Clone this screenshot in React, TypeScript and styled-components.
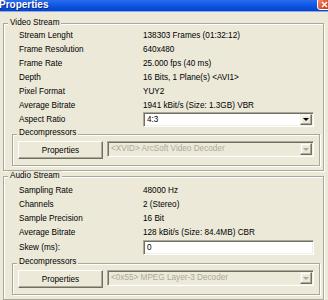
import React from 'react';
import styled, { createGlobalStyle } from 'styled-components';

const Global = createGlobalStyle`
  html, body { margin: 0; padding: 0; background: #ECE9D8; }
  body { font-family: "Liberation Sans", Arial, sans-serif; font-size: 8.2px; color: #000; }
  * { box-sizing: border-box; }
`;

const Window = styled.div`
  width: 328px;
  height: 300px;
  overflow: hidden;
  background: #ECE9D8;
  display: flex;
  flex-direction: column;
`;

const TitleBar = styled.div`
  flex: none;
  height: 12px;
  display: flex;
  align-items: flex-start;
  justify-content: space-between;
  background: linear-gradient(#2B6CEF, #0A55E2 55%, #0444CC);
  border-bottom: 1px solid #8EA9E0;
`;

const TitleText = styled.span`
  margin: -1px 0 0 -1px;
  font-family: "Liberation Sans", Arial, sans-serif;
  font-weight: bold;
  font-size: 10px;
  line-height: 11px;
  color: #fff;
  text-shadow: 1px 1px 0 #0A2A8A;
`;

const CloseButton = styled.div`
  width: 14px;
  height: 12px;
  margin: -2px -3px 0 0;
  border: 1px solid #fff;
  border-radius: 3px;
  background: linear-gradient(135deg, #F09A7F, #E0552F 50%, #C23A18);
  display: flex;
  align-items: center;
  justify-content: center;
`;

const Body = styled.div`
  flex: 1;
  padding: 6px 4px 0 3px;
  display: flex;
  flex-direction: column;
`;

const Group = styled.fieldset<{ $mt?: number; $mb?: number; $ml?: number; $mr?: number }>`
  margin: ${p => p.$mt ?? 0}px ${p => p.$mr ?? 0}px ${p => p.$mb ?? 0}px ${p => p.$ml ?? 0}px;
  padding: 0;
  min-inline-size: 0;
  border: 1px solid #ACA899;
  box-shadow: inset 1px 1px 0 #fff, 1px 1px 0 #fff;
  display: flex;
  flex-direction: column;
`;

const Legend = styled.legend<{ $pb?: number }>`
  margin-left: 4px;
  padding: 0 2px ${p => p.$pb ?? 0}px 2px;
  line-height: 10px;
  font-size: 8.2px;
  background: #ECE9D8;
  color: #000;
`;

const Rows = styled.div<{ $pt: number }>`
  display: flex;
  flex-direction: column;
  padding: ${p => p.$pt}px 9px 0 15px;
`;

const Row = styled.div<{ $h?: number; $mt?: number }>`
  display: grid;
  grid-template-columns: 124px 1fr;
  align-items: center;
  height: ${p => p.$h ?? 14}px;
  margin-top: ${p => p.$mt ?? 0}px;
  line-height: 14px;
  white-space: nowrap;
`;

const Sunken = styled.div<{ $disabled?: boolean; $h: number }>`
  height: ${p => p.$h}px;
  display: flex;
  align-items: center;
  background: ${p => (p.$disabled ? '#ECE9D8' : '#fff')};
  color: ${p => (p.$disabled ? '#ACA899' : '#000')};
  border: 1px solid;
  border-color: #ACA899 #fff #fff #ACA899;
  box-shadow: inset 1px 1px 0 #716F64, inset -1px -1px 0 #F1EFE2;
  padding: 0 1px 0 3px;
  line-height: 12px;
  white-space: nowrap;
  overflow: hidden;
`;

const ComboText = styled.span`
  flex: 1;
  overflow: hidden;
`;

const DropButton = styled.div`
  flex: none;
  width: 12px;
  height: calc(100% - 2px);
  background: #ECE9D8;
  border: 1px solid;
  border-color: #F1EFE2 #716F64 #716F64 #F1EFE2;
  box-shadow: inset -1px -1px 0 #ACA899, inset 1px 1px 0 #fff;
  display: flex;
  align-items: center;
  justify-content: center;
`;

const Arrow = styled.span<{ $disabled?: boolean }>`
  width: 0;
  height: 0;
  border-left: 3px solid transparent;
  border-right: 3px solid transparent;
  border-top: 3px solid ${p => (p.$disabled ? '#ACA899' : '#000')};
`;

const DecoRow = styled.div`
  display: flex;
  align-items: flex-start;
  gap: 4px;
  padding: 0 5px 6px 5px;
`;

const Button = styled.button`
  flex: none;
  width: 85px;
  height: 18px;
  padding: 0;
  font-family: "Liberation Sans", Arial, sans-serif;
  font-size: 8.2px;
  color: #000;
  background: #ECE9D8;
  border: 1px solid;
  border-color: #fff #716F64 #716F64 #fff;
  box-shadow: inset -1px -1px 0 #ACA899;
`;

const DecoCombo = styled(Sunken)`
  flex: 1;
`;

type Item = [string, string];

const videoItems: Item[] = [
  ['Stream Lenght', '138303 Frames (01:32:12)'],
  ['Frame Resolution', '640x480'],
  ['Frame Rate', '25.000 fps (40 ms)'],
  ['Depth', '16 Bits, 1 Plane(s) <AVI1>'],
  ['Pixel Format', 'YUY2'],
  ['Average Bitrate', '1941 kBit/s (Size: 1.3GB) VBR'],
];

const audioItems: Item[] = [
  ['Sampling Rate', '48000 Hz'],
  ['Channels', '2 (Stereo)'],
  ['Sample Precision', '16 Bit'],
  ['Average Bitrate', '128 kBit/s (Size: 84.4MB) CBR'],
];

const Decompressors: React.FC<{ name: string; mt: number; mb: number }> = ({ name, mt, mb }) => (
  <Group $mt={mt} $ml={8} $mr={3} $mb={mb}>
    <Legend $pb={3}>Decompressors</Legend>
    <DecoRow>
      <Button>Properties</Button>
      <DecoCombo $disabled $h={16}>
        <ComboText>{name}</ComboText>
        <DropButton>
          <Arrow $disabled />
        </DropButton>
      </DecoCombo>
    </DecoRow>
  </Group>
);

export default function App() {
  return (
    <Window>
      <Global />
      <TitleBar>
        <TitleText>Properties</TitleText>
        <CloseButton>
          <svg width="7" height="7" viewBox="0 0 7 7">
            <path d="M1 1 L6 6 M6 1 L1 6" stroke="#fff" strokeWidth="1.6" />
          </svg>
        </CloseButton>
      </TitleBar>
      <Body>
        <Group>
          <Legend>Video Stream</Legend>
          <Rows $pt={1}>
            {videoItems.map(([k, v]) => (
              <Row key={k}>
                <span>{k}</span>
                <span>{v}</span>
              </Row>
            ))}
            <Row $h={15} $mt={-1}>
              <span>Aspect Ratio</span>
              <Sunken $h={15}>
                <ComboText>4:3</ComboText>
                <DropButton>
                  <Arrow />
                </DropButton>
              </Sunken>
            </Row>
          </Rows>
          <Decompressors name="<XVID> ArcSoft Video Decoder" mt={1} mb={4} />
        </Group>
        <Group>
          <Legend>Audio Stream</Legend>
          <Rows $pt={3}>
            {audioItems.map(([k, v]) => (
              <Row key={k}>
                <span>{k}</span>
                <span>{v}</span>
              </Row>
            ))}
            <Row $h={15}>
              <span>Skew (ms):</span>
              <Sunken $h={15}>
                <ComboText>0</ComboText>
              </Sunken>
            </Row>
          </Rows>
          <Decompressors name="<0x55> MPEG Layer-3 Decoder" mt={2} mb={4} />
        </Group>
      </Body>
    </Window>
  );
}
